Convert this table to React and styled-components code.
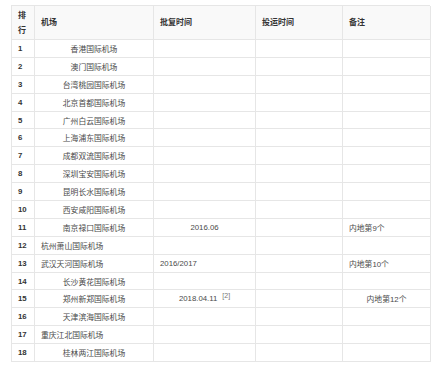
import React from "react"
import styled, { createGlobalStyle } from "styled-components"

const GlobalStyle = createGlobalStyle`
    html, body {
        margin: 0;
        padding: 0;
        background: #fff;
    }
    body {
        font-family: "Liberation Sans", "Noto Sans CJK SC", sans-serif;
    }
`

const Page = styled.div`
    width: 435px;
    height: 376px;
    padding: 5px 0 0 11px;
    box-sizing: border-box;
`

const Table = styled.div`
    display: grid;
    grid-template-columns: 23px 119px 102px 87px 88px;
    grid-template-rows: 34px repeat(18, 17.9px);
    width: 419px;
    border-top: 1px solid #e6e6e6;
    border-left: 1px solid #e6e6e6;
    box-sizing: border-box;
`

const Cell = styled.div`
    display: flex;
    align-items: center;
    justify-content: ${props => props.center ? "center" : "flex-start"};
    padding: 0 ${props => props.center ? "0" : "6px"};
    border-right: 1px solid #e6e6e6;
    border-bottom: 1px solid #e6e6e6;
    box-sizing: border-box;
    font-size: 7.8px;
    color: #4a4a4a;
    white-space: nowrap;
`

const HeadCell = styled(Cell)`
    background: #f9f9f9;
    font-weight: 700;
    font-size: 8px;
    color: #333;
    line-height: 15px;
`

const RankCell = styled(Cell)`
    font-weight: 700;
    color: #333;
    padding: 0 0 0 6px;
`

const Ref = styled.span`
    font-family: "Liberation Sans", sans-serif;
    font-size: 7px;
    color: #777;
    margin-left: 5px;
    align-self: flex-start;
    margin-top: 2px;
`

const rows = [
    { name: "香港国际机场", center: true },
    { name: "澳门国际机场", center: true },
    { name: "台湾桃园国际机场", center: true },
    { name: "北京首都国际机场", center: true },
    { name: "广州白云国际机场", center: true },
    { name: "上海浦东国际机场", center: true },
    { name: "成都双流国际机场", center: true },
    { name: "深圳宝安国际机场", center: true },
    { name: "昆明长水国际机场", center: true },
    { name: "西安咸阳国际机场", center: true },
    { name: "南京禄口国际机场", center: true, approve: "2016.06", approveCenter: true, note: "内地第9个" },
    { name: "杭州萧山国际机场" },
    { name: "武汉天河国际机场", approve: "2016/2017", note: "内地第10个" },
    { name: "长沙黄花国际机场", center: true },
    { name: "郑州新郑国际机场", center: true, approve: "2018.04.11", approveCenter: true, cite: "[2]", note: "内地第12个", noteCenter: true },
    { name: "天津滨海国际机场", center: true },
    { name: "重庆江北国际机场" },
    { name: "桂林两江国际机场", center: true },
]

export default function App() {
    return (
        <>
            <GlobalStyle />
            <Page>
                <Table>
                    <HeadCell>排<br />行</HeadCell>
                    <HeadCell>机场</HeadCell>
                    <HeadCell>批复时间</HeadCell>
                    <HeadCell>投运时间</HeadCell>
                    <HeadCell>备注</HeadCell>
                    {rows.map((r, i) => (
                        <React.Fragment key={i}>
                            <RankCell>{i + 1}</RankCell>
                            <Cell center={r.center}>{r.name}</Cell>
                            <Cell center={r.approveCenter}>
                                {r.approve}
                                {r.cite && <Ref>{r.cite}</Ref>}
                            </Cell>
                            <Cell />
                            <Cell center={r.noteCenter}>{r.note}</Cell>
                        </React.Fragment>
                    ))}
                </Table>
            </Page>
        </>
    )
}
